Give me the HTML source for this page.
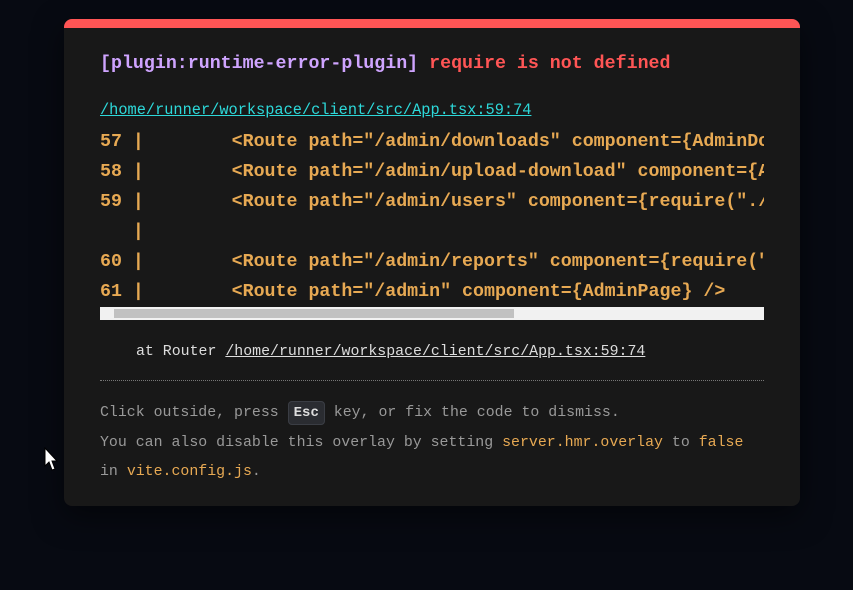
<!DOCTYPE html>
<html><head><style>
body{margin:0;width:853px;height:590px;background:#070a12;overflow:hidden;font-family:"Liberation Mono",monospace;position:relative}
.card{position:absolute;left:64px;top:19px;width:736px;height:487px;background:#181818;border-top:9px solid #ff5555;border-radius:8px;box-sizing:border-box;box-shadow:0 10px 30px rgba(0,0,0,.5)}
.t{position:absolute;left:36px;top:26px;font-size:18.3px;font-weight:bold;white-space:pre}
.p{color:#cfa4ff}.r{color:#ff5555}
.f{position:absolute;left:36px;top:73px;font-size:15.3px;color:#2dd9da;text-decoration:underline;white-space:pre}
.code{position:absolute;left:36px;top:99px;width:664px;height:178px;overflow:hidden;font-size:18.3px;line-height:30px;color:#e7a953;white-space:pre;font-weight:bold}
.sb{position:absolute;left:36px;top:279px;width:664px;height:13px;background:#f1f1f1}
.th{position:absolute;left:14px;top:2px;width:400px;height:9px;background:#c1c1c1}
.stk{position:absolute;left:72px;top:316px;font-size:14.9px;color:#ddd;white-space:pre}
.stk u{color:#ddd}
.hr{position:absolute;left:36px;top:352px;width:664px;border-top:1px dotted #777}
.ft{position:absolute;left:36px;top:371px;font-size:14.9px;line-height:29.5px;color:#999;white-space:pre}
.y{color:#e7a953}
kbd{font-family:inherit;font-weight:bold;color:#ddd;background:#2a2c31;border:1px solid #3a3d44;border-radius:4px;padding:3px 5px;font-size:14px}
</style></head><body>
<div class="card">
<div class="t"><span class="p">[plugin:runtime-error-plugin] </span><span class="r">require is not defined</span></div>
<div class="f">/home/runner/workspace/client/src/App.tsx:59:74</div>
<div class="code">57 |        &lt;Route path="/admin/downloads" component={AdminDownloads} /&gt;
58 |        &lt;Route path="/admin/upload-download" component={AdminUpload} /&gt;
59 |        &lt;Route path="/admin/users" component={require("./pages/admin-users").default} /&gt;
   |
60 |        &lt;Route path="/admin/reports" component={require("./pages/admin-reports").default} /&gt;
61 |        &lt;Route path="/admin" component={AdminPage} /&gt;</div>
<div class="sb"><div class="th"></div></div>
<div class="stk">at Router <u>/home/runner/workspace/client/src/App.tsx:59:74</u></div>
<div class="hr"></div>
<div class="ft">Click outside, press <kbd>Esc</kbd> key, or fix the code to dismiss.
You can also disable this overlay by setting <span class="y">server.hmr.overlay</span> to <span class="y">false</span>
in <span class="y">vite.config.js</span>.</div>
</div>
<svg style="position:absolute;left:44px;top:447px" width="14" height="26" viewBox="0 0 14 26"><path d="M1 1 L1 19 L5 15 L8 23 L11 22 L8 14 L13 14 Z" fill="#fff" stroke="#000" stroke-width="1"/></svg>
</body></html>
